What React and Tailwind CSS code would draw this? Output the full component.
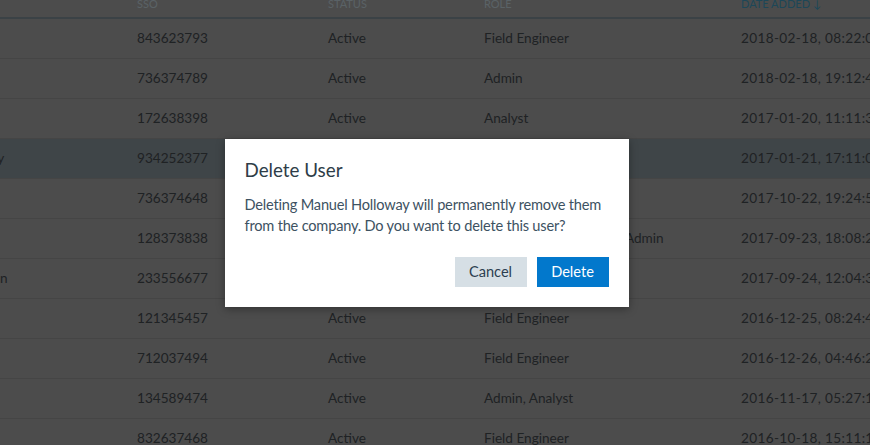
const rows = [
  { name: "Isabel Ruiz", sso: "843623793", status: "Active", role: "Field Engineer", date: "2018-02-18, 08:22:04 AM" },
  { name: "Jonathan Price", sso: "736374789", status: "Active", role: "Admin", date: "2018-02-18, 19:12:43 PM" },
  { name: "Olivia Chen", sso: "172638398", status: "Active", role: "Analyst", date: "2017-01-20, 11:11:32 AM" },
  { name: "Manuel Holloway", sso: "934252377", status: "Active", role: "Admin", date: "2017-01-21, 17:11:05 PM", selected: true },
  { name: "Grace Turner", sso: "736374648", status: "Active", role: "Analyst", date: "2017-10-22, 19:24:53 PM" },
  { name: "Ethan Brooks", sso: "128373838", status: "Active", role: "Field Engineer, Analyst, Admin", date: "2017-09-23, 18:08:21 PM" },
  { name: "Sebastian Hudson", sso: "233556677", status: "Active", role: "Field Engineer", date: "2017-09-24, 12:04:37 PM" },
  { name: "Lucas Reed", sso: "121345457", status: "Active", role: "Field Engineer", date: "2016-12-25, 08:24:41 AM" },
  { name: "Mia Foster", sso: "712037494", status: "Active", role: "Field Engineer", date: "2016-12-26, 04:46:29 AM" },
  { name: "Noah Bennett", sso: "134589474", status: "Active", role: "Admin, Analyst", date: "2016-11-17, 05:27:16 AM" },
  { name: "Ava Collins", sso: "832637468", status: "Active", role: "Field Engineer", date: "2016-10-18, 15:11:18 PM" },
];

function UserTable() {
  return (
    <div className="ml-[-100px] w-[1100px]">
      <div className="flex h-[19px] items-end border-b-2 border-[#76848c] text-[11px] uppercase leading-none text-[#b4c4cc]">
        <div className="w-[237px] pb-[8px]">Name</div>
        <div className="w-[191px] pb-[8px]">SSO</div>
        <div className="w-[156px] pb-[8px]">Status</div>
        <div className="w-[257px] pb-[8px]">Role</div>
        <div className="pb-[8px] text-[#3a8fb0]">Date Added ↓</div>
      </div>
      {rows.map((r) => (
        <div
          key={r.sso}
          className={`flex h-[40px] items-center border-b border-[#8a8a8a] pb-[1px] text-[13.6px] text-[#3e4448] whitespace-nowrap ${
            r.selected ? "bg-[#7e8a90]" : "bg-[#989898]"
          }`}
        >
          <div className="w-[237px]">{r.name}</div>
          <div className="w-[191px]">{r.sso}</div>
          <div className="w-[156px]">{r.status}</div>
          <div className="w-[257px]">{r.role}</div>
          <div className="tracking-[0.35px]">{r.date}</div>
        </div>
      ))}
    </div>
  );
}

function DeleteDialog() {
  return (
    <div className="w-[404px] bg-white px-5 pt-[19px] pb-5 shadow-[0_2px_8px_rgba(0,0,0,0.35)]">
      <h2 className="text-[18.8px] leading-6 text-[#2e3d48]">Delete User</h2>
      <p className="mt-3 text-[14.6px] leading-[21px] tracking-[-0.2px] text-[#3d5262]">
        Deleting Manuel Holloway will permanently remove them from the company. Do you want to delete this user?
      </p>
      <div className="mt-[21px] flex justify-end gap-[10px]">
        <button className="h-[30px] w-[72px] bg-[#d6dfe5] text-[14.6px] text-[#2c3e50]">Cancel</button>
        <button className="h-[30px] w-[72px] bg-[#0278cc] text-[14.6px] text-white">Delete</button>
      </div>
    </div>
  );
}

export default function App() {
  return (
    <div
      className="relative h-[445px] w-[870px] overflow-hidden bg-[#989898]"
      style={{ fontFamily: "Lato, 'Open Sans', sans-serif" }}
    >
      <UserTable />
      <div className="absolute inset-0 flex items-center justify-center bg-black/50 pr-[17px]">
        <DeleteDialog />
      </div>
    </div>
  );
}
